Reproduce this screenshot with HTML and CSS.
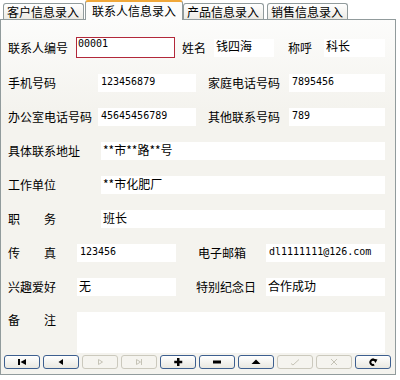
FILE: index.html
```html
<!DOCTYPE html>
<html lang="zh-CN">
<head>
    <meta charset="UTF-8">
    <title>联系人信息录入</title>
    <link rel="stylesheet" href="styles.css">
</head>
<body>
<div class="window">
    <div class="tabs">
        <div class="tab">客户信息录入</div>
        <div class="tab active">联系人信息录入</div>
        <div class="tab">产品信息录入</div>
        <div class="tab">销售信息录入</div>
    </div>

    <div class="panel">
        <div class="form">
            <div class="row first">
                <label class="l68">联系人编号</label>
                <input class="field f99 mono current" value="00001">
                <label class="l32 ml7">姓名</label>
                <input class="field f60" value="钱四海">
                <label class="l36 ml14">称呼</label>
                <input class="field f61" value="科长">
            </div>
            <div class="row">
                <label class="l90">手机号码</label>
                <input class="field f98 mono" value="123456879">
                <label class="l81 ml12">家庭电话号码</label>
                <input class="field f96 mono" value="7895456">
            </div>
            <div class="row">
                <label class="l90">办公室电话号码</label>
                <input class="field f98 mono" value="45645456789">
                <label class="l81 ml12">其他联系号码</label>
                <input class="field f96 mono" value="789">
            </div>
            <div class="row">
                <label class="l93">具体联系地址</label>
                <input class="field wide" value="**市**路**号">
            </div>
            <div class="row">
                <label class="l93">工作单位</label>
                <input class="field wide" value="**市化肥厂">
            </div>
            <div class="row">
                <label class="l93">职　　务</label>
                <input class="field wide" value="班长">
            </div>
            <div class="row">
                <label class="l69">传　　真</label>
                <input class="field f99 mono" value="123456">
                <label class="l68 ml22">电子邮箱</label>
                <input class="field f119 mono" value="dl1111111@126.com">
            </div>
            <div class="row">
                <label class="l69">兴趣爱好</label>
                <input class="field f99" value="无">
                <label class="l70 ml20">特别纪念日</label>
                <input class="field f119" value="合作成功">
            </div>
            <div class="row memo">
                <label class="l69">备　　注</label>
                <textarea class="field memo-box"></textarea>
            </div>
        </div>

        <div class="toolbar">
            <button class="btn">
                <svg width="10" height="8" viewBox="0 0 10 8"><rect x="1" y="1" width="2" height="6"/><polygon points="9,1 9,7 3.5,4"/></svg>
            </button>
            <button class="btn">
                <svg width="10" height="8" viewBox="0 0 10 8"><polygon points="7,1 7,7 2.5,4"/></svg>
            </button>
            <button class="btn off">
                <svg width="10" height="8" viewBox="0 0 10 8"><polygon points="3.5,1.5 3.5,6.5 7.5,4" fill="none" stroke="#c5c3b6"/></svg>
            </button>
            <button class="btn off">
                <svg width="10" height="8" viewBox="0 0 10 8"><polygon points="2.5,1.5 2.5,6.5 6.5,4" fill="none" stroke="#c5c3b6"/><line x1="7.5" y1="1" x2="7.5" y2="7" stroke="#c5c3b6"/></svg>
            </button>
            <button class="btn">
                <svg width="10" height="8" viewBox="0 0 10 8"><rect x="4" y="0" width="2.5" height="8"/><rect x="1.25" y="2.75" width="8" height="2.5"/></svg>
            </button>
            <button class="btn">
                <svg width="10" height="8" viewBox="0 0 10 8"><rect x="1" y="2.5" width="8" height="3"/></svg>
            </button>
            <button class="btn">
                <svg width="10" height="8" viewBox="0 0 10 8"><polygon points="0.5,6 9.5,6 5,1.5"/></svg>
            </button>
            <button class="btn off">
                <svg width="10" height="8" viewBox="0 0 10 8"><polyline points="1,5.5 3,7 9,1.5" fill="none" stroke="#c5c3b6"/></svg>
            </button>
            <button class="btn off">
                <svg width="10" height="8" viewBox="0 0 10 8"><path d="M2 1 L8 7 M8 1 L2 7" fill="none" stroke="#c5c3b6"/></svg>
            </button>
            <button class="btn">
                <svg width="10" height="8" viewBox="0 0 10 8"><path d="M6.5 2.2 A2.6 2.6 0 1 0 6.2 6.6" fill="none" stroke="#000" stroke-width="2"/><polygon points="4.5,0.5 9.5,1.5 7.5,5"/></svg>
            </button>
        </div>
    </div>
</div>
</body>
</html>
```

FILE: styles.css
```css
body {
    margin: 0;
    background: #fff;
    font-family: "Noto Sans CJK SC", sans-serif;
    font-size: 12px;
    color: #000;
}
.window { width: 396px; }

/* Tabs */
.tabs {
    display: flex;
    align-items: flex-end;
    height: 19px;
    padding-left: 3px;
}
.tab {
    height: 15px;
    line-height: 15px;
    padding: 0 4px 0 3px;
    margin-right: 1px;
    border: 1px solid #919b9c;
    border-bottom: 0;
    border-radius: 3px 3px 0 0;
    background: linear-gradient(#fff, #ecebe5);
    white-space: nowrap;
}
.tab.active {
    position: relative;
    z-index: 1;
    height: 18px;
    line-height: 18px;
    padding: 0 6px;
    margin-bottom: -1px;
    margin-right: 0;
    border-top: 2px solid #f0a83a;
    background: #fcfcfb;
}
.tab:last-child { margin-left: 2px; }

/* Panel */
.panel {
    width: 394px;
    border: 1px solid #919b9c;
    background: linear-gradient(#fcfcfb, #f4f3ee 90px);
    padding: 17px 0 5px;
}
.form {
    display: flex;
    flex-direction: column;
    gap: 16px;
}
.row {
    display: flex;
    align-items: center;
    height: 18px;
    padding-left: 7px;
}
.row.first { height: 21px; }
.row.memo {
    height: 41px;
    align-items: flex-start;
}
.row.memo label { margin-top: 1px; }

label {
    flex: none;
    line-height: 14px;
    white-space: nowrap;
}
.l32 { width: 32px; }
.l36 { width: 36px; }
.l68 { width: 68px; }
.l69 { width: 69px; }
.l70 { width: 70px; }
.l81 { width: 81px; }
.l90 { width: 90px; }
.l93 { width: 93px; }
.ml7 { margin-left: 7px; }
.ml12 { margin-left: 12px; }
.ml14 { margin-left: 14px; }
.ml20 { margin-left: 20px; }
.ml22 { margin-left: 22px; }

.field {
    box-sizing: border-box;
    height: 18px;
    margin: 0;
    padding: 0 2px 4px;
    border: 0;
    outline: none;
    background: #fff;
    font-family: "Noto Sans CJK SC", sans-serif;
    font-size: 12px;
    color: #000;
}
.field.mono {
    font-family: "DejaVu Sans Mono", monospace;
    font-size: 10px;
    padding-left: 3px;
}
.field.current {
    height: 21px;
    padding: 0 1px 9px;
    border: 1px solid #b2283a;
}
.f60 { width: 60px; }
.f61 { width: 61px; }
.f96 { width: 96px; }
.f98 { width: 98px; }
.f99 { width: 99px; }
.f119 { width: 119px; }
.wide { width: 284px; }
.memo-box {
    width: 308px;
    height: 41px;
    resize: none;
}

/* Navigator buttons */
.toolbar {
    display: flex;
    gap: 3px;
    padding: 0 3px;
    margin-top: 2px;
}
.btn {
    width: 36px;
    height: 14px;
    padding: 0;
    display: flex;
    align-items: center;
    justify-content: center;
    border: 1px solid #3d5f8f;
    border-radius: 3px;
    background: linear-gradient(#fff, #e9e8e1);
}
.btn.off {
    border-color: #cbc9bd;
    background: #f5f4ef;
}
.btn svg { display: block; }
```
